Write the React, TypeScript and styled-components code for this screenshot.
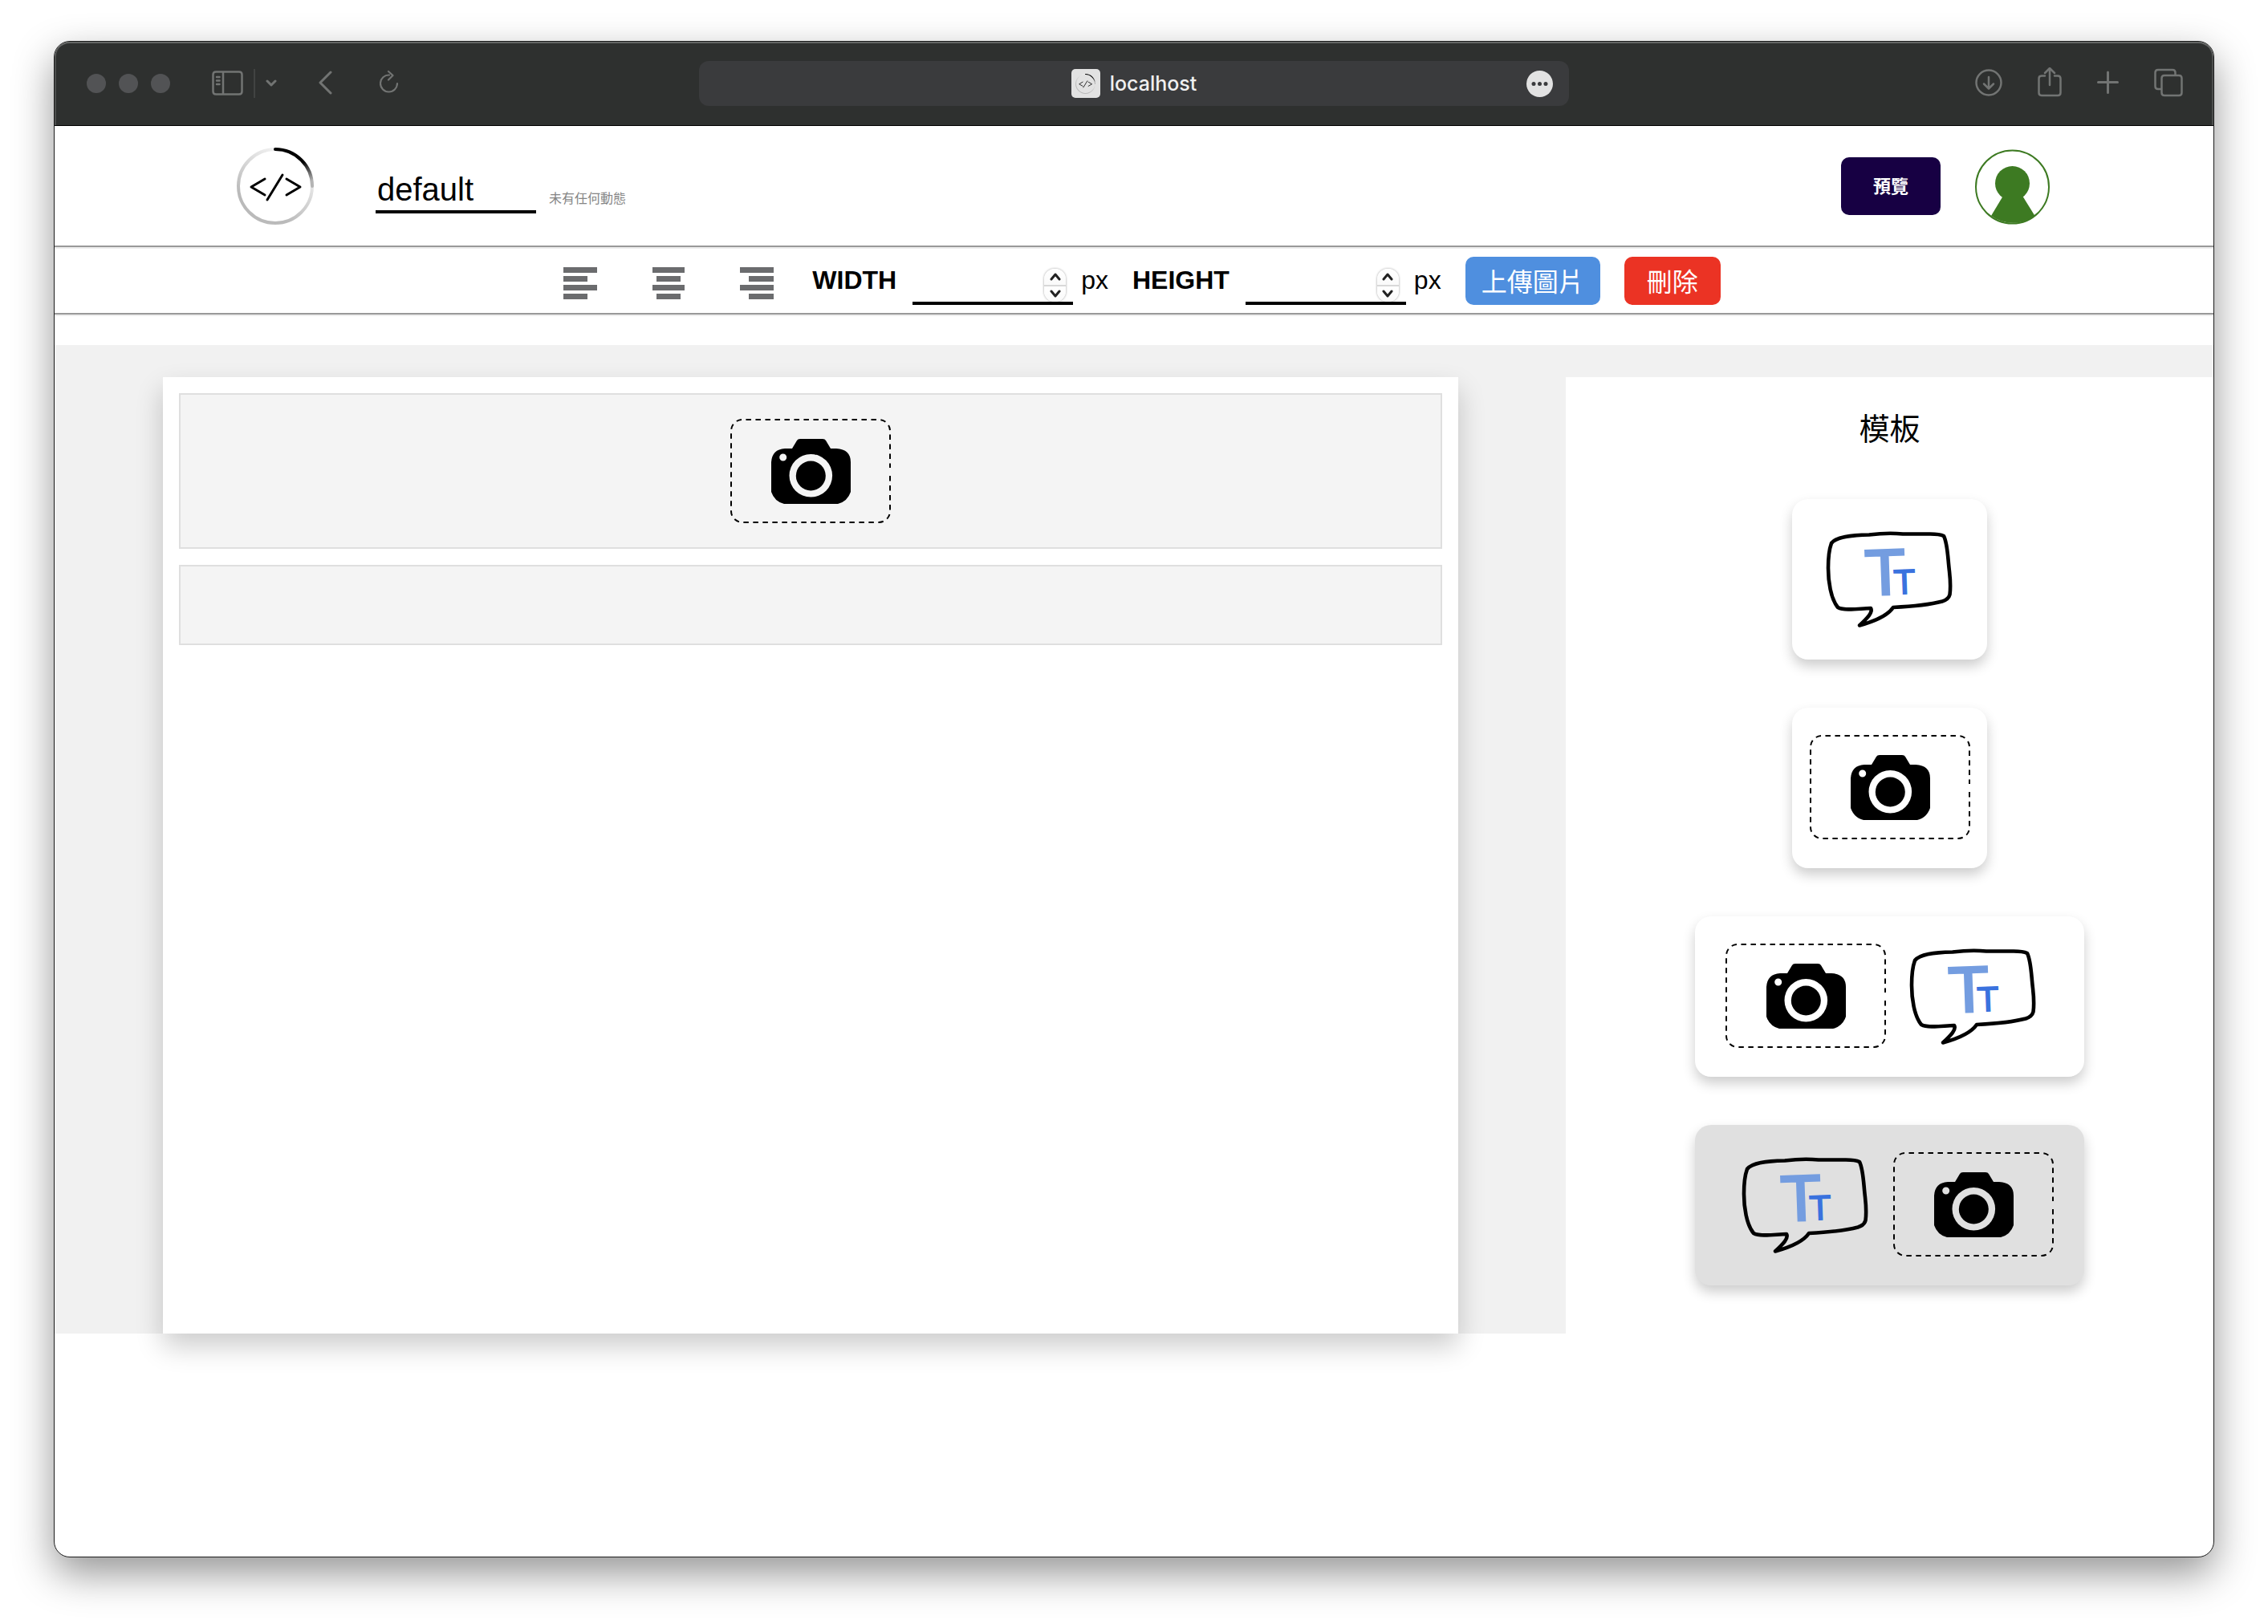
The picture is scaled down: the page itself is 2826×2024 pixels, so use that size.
import React, { useState } from "react";
import styled, { createGlobalStyle } from "styled-components";

const sans = `"Liberation Sans", "Noto Sans CJK TC", sans-serif`;
const cjk = `"Noto Sans CJK TC", "Liberation Sans", sans-serif`;

const GlobalStyle = createGlobalStyle`
  *, *::before, *::after { box-sizing: border-box; }
  body {
    margin: 0;
    background: #fff;
    color: #000;
    font-family: ${sans};
  }
  button, input { font: inherit; color: inherit; }
  svg { display: block; flex: none; }
`;

const Desktop = styled.div`
  display: flex;
  min-height: 100vh;
  padding: 51px 67px 83px;
`;

const BrowserWindow = styled.div`
  flex: 1;
  min-width: 0;
  overflow: hidden;
  background: #fff;
  border: 1px solid #1c1c1c;
  border-radius: 20px;
  box-shadow: 0 20px 50px rgba(0, 0, 0, 0.42);
`;

/* ---------- browser chrome ---------- */

const TitleBar = styled.div`
  display: grid;
  grid-template-columns: 763fr 1084fr 765fr;
  align-items: center;
  height: 105px;
  padding: 0 38px 0 40px;
  background: #2e302f;
  color: #727473;
  border-bottom: 1px solid #000;
  border-radius: 19px 19px 0 0;
  box-shadow: inset 0 2px 0 #646665, inset 2px 0 0 #4c4e4d, inset -2px 0 0 #4c4e4d;
`;

const ChromeGroup = styled.div<{ $end?: boolean; $gap: number }>`
  display: flex;
  align-items: center;
  justify-content: ${(p) => (p.$end ? "flex-end" : "flex-start")};
  gap: ${(p) => p.$gap}px;
`;

const TrafficLights = styled.div`
  display: flex;
  gap: 16px;
`;

const Light = styled.span`
  width: 24px;
  height: 24px;
  border-radius: 50%;
  background: #525355;
`;

const SidebarControls = styled.div`
  display: flex;
  align-items: center;
  gap: 13px;
`;

const Divider = styled.span`
  width: 2px;
  height: 36px;
  background: #414342;
`;

const IconButton = styled.button`
  display: flex;
  padding: 0;
  border: 0;
  background: none;
  cursor: pointer;
`;

const AddressBar = styled.div`
  display: grid;
  grid-template-columns: 1fr auto 1fr;
  align-items: center;
  height: 56px;
  padding: 0 20px;
  border-radius: 12px;
  background: #3a3b3d;
`;

const Address = styled.div`
  grid-column: 2;
  display: flex;
  align-items: center;
  gap: 12px;
  color: #f0f0f0;
  font-family: Inter, "Liberation Sans", sans-serif;
  font-size: 25px;
  font-weight: 500;
  line-height: 32px;
`;

const Favicon = styled.span`
  display: flex;
  align-items: center;
  justify-content: center;
  width: 36px;
  height: 36px;
  border-radius: 5px;
  background: #e2e2e2;
`;

const MoreButton = styled(IconButton)`
  justify-self: end;
`;

/* ---------- page header ---------- */

const Header = styled.header`
  display: flex;
  align-items: center;
  justify-content: space-between;
  height: 149px;
  padding: 0 204px 0 227px;
`;

const HeaderSide = styled.div<{ $gap: number }>`
  display: flex;
  align-items: center;
  gap: ${(p) => p.$gap}px;
`;

const TitleField = styled.div`
  display: flex;
  align-items: flex-end;
  gap: 16px;
`;

const TitleInput = styled.input`
  width: 200px;
  height: 69px;
  padding: 14px 2px 0;
  border: 0;
  border-bottom: 4px solid #000;
  outline: 0;
  background: none;
  font-size: 40px;
`;

const Status = styled.span`
  padding-bottom: 8px;
  color: #858585;
  font-family: ${cjk};
  font-size: 16px;
  line-height: 24px;
`;

const Button = styled.button<{ $tone: string }>`
  height: 60px;
  min-width: 120px;
  padding: 0 20px 2px;
  border: 0;
  border-radius: 10px;
  background: ${(p) => p.$tone};
  color: #fff;
  font-family: ${cjk};
  font-size: 32px;
  line-height: 40px;
  cursor: pointer;
`;

const PreviewButton = styled(Button)`
  height: 72px;
  min-width: 124px;
  padding-bottom: 4px;
  font-size: 22px;
  font-weight: 700;
`;

const Rule = styled.hr`
  height: 4px;
  margin: 0;
  border: 0;
  border-top: 2px solid #999;
  border-bottom: 2px solid #ededed;
`;

/* ---------- formatting toolbar ---------- */

const Toolbar = styled.div`
  display: flex;
  align-items: center;
  justify-content: center;
  gap: 30px;
  height: 80px;
  padding-left: 20px;
  font-size: 32px;
`;

const AlignGroup = styled.div`
  display: flex;
  gap: 68px;
  margin-right: 18px;
`;

const Field = styled.div`
  display: flex;
  align-items: center;
`;

const FieldLabel = styled.label`
  margin-right: 20px;
  padding-bottom: 2px;
  font-weight: 700;
`;

const Unit = styled.span`
  padding-bottom: 2px;
`;

const NumberBox = styled.div`
  position: relative;
  width: 200px;
  margin-right: 10px;
`;

const NumberInput = styled.input`
  display: block;
  width: 100%;
  height: 60px;
  padding: 0 40px 0 2px;
  border: 0;
  border-bottom: 4px solid #000;
  outline: 0;
  background: none;
  appearance: textfield;
  &::-webkit-inner-spin-button,
  &::-webkit-outer-spin-button { appearance: none; margin: 0; }
`;

const Stepper = styled.div`
  position: absolute;
  right: 9px;
  bottom: 4px;
  display: flex;
  flex-direction: column;
  width: 27px;
  height: 41px;
  border-radius: 13px;
  overflow: hidden;
  background: #fff;
  box-shadow: 0 0 3px rgba(0, 0, 0, 0.4);
`;

const StepButton = styled.button`
  display: flex;
  flex: 1;
  align-items: center;
  justify-content: center;
  padding: 0;
  border: 0;
  background: linear-gradient(#fff, #fafafa);
  cursor: pointer;
  & + & { border-top: 2px solid #d8d8d8; }
`;

/* ---------- editor ---------- */

const Editor = styled.main`
  display: flex;
  margin-top: 36px;
  padding-top: 40px;
  background: #f1f1f1;
`;

const Canvas = styled.section`
  display: flex;
  flex: 0 0 60%;
  flex-direction: column;
  gap: 20px;
  margin: 0 5%;
  padding: 20px;
  background: #fff;
  box-shadow: 0 16px 32px rgba(0, 0, 0, 0.2);
`;

const Block = styled.div`
  display: flex;
  justify-content: center;
  min-height: 100px;
  padding: 30px;
  border: 2px solid #dfdfdf;
  background: #f4f4f4;
`;

const Templates = styled.aside`
  display: flex;
  flex: 0 0 30%;
  flex-direction: column;
  align-items: center;
  padding: 38px 0 60px;
  background: #fff;
`;

const TemplatesTitle = styled.h2`
  margin: 0 0 66px;
  font-family: ${cjk};
  font-size: 38px;
  font-weight: 400;
  line-height: 48px;
`;

const TemplateList = styled.div`
  display: flex;
  flex-direction: column;
  align-items: center;
  gap: 60px;
  width: 100%;
`;

const TemplateCard = styled.button<{ $wide?: boolean; $active?: boolean }>`
  display: flex;
  align-items: flex-start;
  justify-content: center;
  gap: 9px;
  width: ${(p) => (p.$wide ? "60%" : "30%")};
  height: 200px;
  padding: 34px 0 0;
  border: 0;
  border-radius: 20px;
  background: ${(p) => (p.$active ? "#e0e0e0" : "#fff")};
  box-shadow: 0 8px 16px rgba(0, 0, 0, 0.2);
  cursor: grab;
`;

/* ---------- drawings ---------- */

function Logo({ size, id }: { size: number; id: string }) {
  return (
    <svg width={size} height={size} viewBox="0 0 96 96" fill="none" aria-hidden="true">
      <defs>
        <linearGradient id={`${id}-dark`} gradientUnits="userSpaceOnUse" x1="82" y1="18" x2="92" y2="42">
          <stop offset="0" stopColor="#000" />
          <stop offset="1" stopColor="#b4b4b4" />
        </linearGradient>
        <linearGradient id={`${id}-light`} gradientUnits="userSpaceOnUse" x1="48" y1="0" x2="10" y2="60">
          <stop offset="0" stopColor="#f2f2f2" />
          <stop offset="1" stopColor="#bababa" />
        </linearGradient>
      </defs>
      <path d="M94 48A46 46 0 0 1 48 94A46 46 0 0 1 2 48A46 46 0 0 1 48 2" stroke={`url(#${id}-light)`} strokeWidth="4" />
      <path d="M48 2A46 46 0 0 1 94 48" stroke={`url(#${id}-dark)`} strokeWidth="4" strokeLinecap="round" />
      <path d="M35 39L18 49L35 59M57 34L38 65M62 39L79 49L62 59" stroke="#000" strokeWidth="3" strokeLinecap="round" strokeLinejoin="round" />
    </svg>
  );
}

function Avatar() {
  return (
    <svg width="93" height="96" viewBox="0 0 93 96" aria-hidden="true">
      <circle cx="46.500" cy="49" r="45.500" fill="#fff" stroke="#3d7a22" strokeWidth="2" />
      <circle cx="46.500" cy="44.500" r="21.500" fill="#3d7a22" />
      <path d="M35 60L20 85A46.500 46.500 0 0 0 74.500 85L59 60Z" fill="#3d7a22" />
    </svg>
  );
}

function CameraArt() {
  return (
    <svg width="200" height="130" viewBox="0 0 200 130" aria-hidden="true">
      <path
        d="M199 71V115A14 14 0 0 1 185 129H15A14 14 0 0 1 1 115V15A14 14 0 0 1 15 1H185A14 14 0 0 1 199 15V61"
        fill="none"
        stroke="#000"
        strokeWidth="2"
        strokeDasharray="6.500 5.500"
      />
      <path
        fillRule="evenodd"
        d="M77 37L83 27Q84 25 87 25H115Q118 25 119 27L125 37H132Q150 38 150 54V91Q146 103 134 106H67Q55 103 51 91V54Q52 38 68 37ZM100.300 44A26.800 26.800 0 1 0 100.300 97.600A26.800 26.800 0 1 0 100.300 44ZM65.700 43.500A4.500 4.500 0 1 0 65.700 52.500A4.500 4.500 0 1 0 65.700 43.500Z"
      />
      <circle cx="100.300" cy="71" r="18.500" />
    </svg>
  );
}

function TextArt() {
  return (
    <svg width="200" height="130" viewBox="0 0 200 130" aria-hidden="true">
      <path
        d="M27 21C33 13 51 11 74 10.500C90 8.500 106 8.500 116 9.500H150Q162 9.500 167 12C172 22 172 40 174 56Q176 74 174.500 85Q173 91 165 93.500C148 98 124 100 104 101C98 110 82 118 62 123.500C72 114 79 107 76 102C64 102 44 106 35 101C26 90 23 68 23 52Q23 32 27 21Z"
        fill="none"
        stroke="#000"
        strokeWidth="4.600"
        strokeLinejoin="round"
      />
      <g fontFamily='"DejaVu Sans", sans-serif' textAnchor="middle">
        <text x="95" y="85" fontSize="76" fill="#749de0" stroke="#749de0" strokeWidth="3" transform="rotate(-2 95 85)">T</text>
        <text x="118.500" y="84" fontSize="41" fill="#3a72de" stroke="#3a72de" strokeWidth="1.500" transform="rotate(-2 118.500 84)">T</text>
      </g>
    </svg>
  );
}

const alignBars = {
  left: [[0, 42], [0, 30], [0, 42], [0, 30]],
  center: [[1, 40], [6, 30], [1, 40], [6, 30]],
  right: [[0, 42], [11, 31], [0, 42], [11, 31]],
};

function AlignIcon({ side }: { side: keyof typeof alignBars }) {
  return (
    <svg width="42" height="46" viewBox="0 0 42 46" fill="#6b6c6e" aria-hidden="true">
      {alignBars[side].map(([x, width], i) => (
        <rect key={i} x={x} y={6 + i * 11} width={width} height="7" />
      ))}
    </svg>
  );
}

function Stroke({ width, d, weight = 3 }: { width: number; d: string; weight?: number }) {
  return (
    <svg
      width={width}
      height="40"
      viewBox={`0 0 ${width} 40`}
      fill="none"
      stroke="currentColor"
      strokeWidth={weight}
      strokeLinecap="round"
      strokeLinejoin="round"
      aria-hidden="true"
    >
      <path d={d} />
    </svg>
  );
}

function Chevron({ up }: { up?: boolean }) {
  return (
    <svg width="14" height="10" viewBox="0 0 14 10" fill="none" stroke="#222" strokeWidth="3" strokeLinecap="round" strokeLinejoin="round" aria-hidden="true">
      <path d={up ? "M2 8L7 2L12 8" : "M2 2L7 8L12 2"} />
    </svg>
  );
}

function SizeField({ id, label }: { id: string; label: string }) {
  const [value, setValue] = useState("");
  const step = (by: number) => setValue(String(Number(value) + by));
  return (
    <Field>
      <FieldLabel htmlFor={id}>{label}</FieldLabel>
      <NumberBox>
        <NumberInput id={id} type="number" value={value} onChange={(e) => setValue(e.target.value)} />
        <Stepper>
          <StepButton type="button" aria-label={`${label} +`} onClick={() => step(1)}><Chevron up /></StepButton>
          <StepButton type="button" aria-label={`${label} -`} onClick={() => step(-1)}><Chevron /></StepButton>
        </Stepper>
      </NumberBox>
      <Unit>px</Unit>
    </Field>
  );
}

function BrowserChrome() {
  return (
    <TitleBar>
      <ChromeGroup $gap={52}>
        <TrafficLights><Light /><Light /><Light /></TrafficLights>
        <SidebarControls>
          <IconButton aria-label="Sidebar">
            <Stroke width={39} d="M5 5.500H34Q37.500 5.500 37.500 9V30Q37.500 33.500 34 33.500H5Q1.500 33.500 1.500 30V9Q1.500 5.500 5 5.500ZM14 5.500V33.500M6 12H9.500M6 16.500H9.500M6 21H9.500" weight={2.5} />
          </IconButton>
          <Divider />
          <IconButton aria-label="Tab groups"><Stroke width={14} d="M2 17L7 22L12 17" /></IconButton>
        </SidebarControls>
        <ChromeGroup $gap={59}>
          <IconButton aria-label="Back"><Stroke width={17} d="M15 6L2 19L15 32" /></IconButton>
          <IconButton aria-label="Reload"><Stroke width={23} d="M12 9.500A10.500 10.500 0 1 0 22 20M11 5L16.500 10L11 15.500" weight={2.2} /></IconButton>
        </ChromeGroup>
      </ChromeGroup>
      <AddressBar>
        <Address>
          <Favicon><Logo size={25} id="favicon" /></Favicon>
          localhost
        </Address>
        <MoreButton aria-label="More">
          <svg width="33" height="33" viewBox="0 0 33 33" aria-hidden="true">
            <circle cx="16.500" cy="16.500" r="16.500" fill="#e2e2e2" />
            <g fill="#3a3b3d">
              <circle cx="9" cy="16.500" r="2.500" />
              <circle cx="16.500" cy="16.500" r="2.500" />
              <circle cx="24" cy="16.500" r="2.500" />
            </g>
          </svg>
        </MoreButton>
      </AddressBar>
      <ChromeGroup $end $gap={44}>
        <IconButton aria-label="Downloads"><Stroke width={34} d="M17 3.500A15.500 15.500 0 1 0 17 34.500A15.500 15.500 0 1 0 17 3.500ZM17 12V26M11 20.500L17 26.500L23 20.500" weight={2.5} /></IconButton>
        <IconButton aria-label="Share"><Stroke width={30} d="M9 10.500H5Q1.500 10.500 1.500 14V31.500Q1.500 35 5 35H25Q28.500 35 28.500 31.500V14Q28.500 10.500 25 10.500H21M15 22V1.500M9 7L15 1L21 7" weight={2.5} /></IconButton>
        <IconButton aria-label="New tab"><Stroke width={27} d="M13.500 6V31.500M1.500 18.500H25.500" /></IconButton>
        <IconButton aria-label="Tabs"><Stroke width={36} d="M13 10H31Q34.500 10 34.500 13.500V31.500Q34.500 35 31 35H13Q9.500 35 9.500 31.500V13.500Q9.500 10 13 10ZM26.500 9V6.500Q26.500 3 23 3H5Q1.500 3 1.500 6.500V23.500Q1.500 27 5 27H8.500" weight={2.5} /></IconButton>
      </ChromeGroup>
    </TitleBar>
  );
}

export default function App() {
  const [title, setTitle] = useState("default");
  return (
    <>
      <GlobalStyle />
      <Desktop>
        <BrowserWindow>
          <BrowserChrome />
          <Header>
            <HeaderSide $gap={77}>
              <Logo size={96} id="logo" />
              <TitleField>
                <TitleInput aria-label="Title" value={title} onChange={(e) => setTitle(e.target.value)} />
                <Status>未有任何動態</Status>
              </TitleField>
            </HeaderSide>
            <HeaderSide $gap={43}>
              <PreviewButton $tone="#170043">預覽</PreviewButton>
              <IconButton aria-label="Account"><Avatar /></IconButton>
            </HeaderSide>
          </Header>
          <Rule />
          <Toolbar>
            <AlignGroup>
              <IconButton aria-label="Align left"><AlignIcon side="left" /></IconButton>
              <IconButton aria-label="Align center"><AlignIcon side="center" /></IconButton>
              <IconButton aria-label="Align right"><AlignIcon side="right" /></IconButton>
            </AlignGroup>
            <SizeField id="width" label="WIDTH" />
            <SizeField id="height" label="HEIGHT" />
            <Button $tone="#4f8fdf">上傳圖片</Button>
            <Button $tone="#eb3324">刪除</Button>
          </Toolbar>
          <Rule />
          <Editor>
            <Canvas>
              <Block><CameraArt /></Block>
              <Block />
            </Canvas>
            <Templates>
              <TemplatesTitle>模板</TemplatesTitle>
              <TemplateList>
                <TemplateCard aria-label="Text"><TextArt /></TemplateCard>
                <TemplateCard aria-label="Image"><CameraArt /></TemplateCard>
                <TemplateCard $wide aria-label="Image and text"><CameraArt /><TextArt /></TemplateCard>
                <TemplateCard $wide $active aria-label="Text and image"><TextArt /><CameraArt /></TemplateCard>
              </TemplateList>
            </Templates>
          </Editor>
        </BrowserWindow>
      </Desktop>
    </>
  );
}
